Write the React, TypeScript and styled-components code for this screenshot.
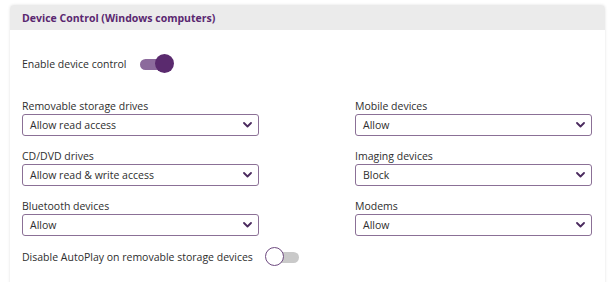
import React from "react";
import styled, { createGlobalStyle } from "styled-components";

const Global = createGlobalStyle`
  html, body { margin: 0; padding: 0; background: #ffffff; }
  body { font-family: "Open Sans", "Noto Sans", sans-serif; color: #2e2e2e; }
`;

const Page = styled.div`
  padding: 5px 5px 0 10px;
`;

const Card = styled.section`
  background: #ffffff;
  border-radius: 4px 4px 0 0;
  box-shadow: 0 0 3px rgba(0, 0, 0, 0.12);
  height: 290px;
`;

const Header = styled.div`
  height: 25px;
  display: flex;
  align-items: center;
  padding-left: 12px;
  background: #ebebeb;
  border-radius: 4px 4px 0 0;
  font-size: 10.5px;
  font-weight: 700;
  color: #5a2770;
`;

const Body = styled.div`
  padding: 24px 13px 0 12px;
  display: flex;
  flex-direction: column;
`;

const ToggleRow = styled.div<{ $mt?: number }>`
  display: flex;
  align-items: center;
  gap: 12px;
  height: 20px;
  margin-top: ${(p) => p.$mt ?? 0}px;
  font-size: 10.5px;
`;

const Track = styled.div<{ $on: boolean }>`
  position: relative;
  width: 36px;
  height: 20px;
  &::before {
    content: "";
    position: absolute;
    left: 2px;
    right: 2px;
    top: 5px;
    height: 11px;
    border-radius: 6px;
    background: ${(p) => (p.$on ? "#8c6a9c" : "#c9c9c9")};
  }
`;

const Thumb = styled.div<{ $on: boolean }>`
  position: absolute;
  top: 0;
  ${(p) => (p.$on ? "right: 0;" : "left: 0;")}
  width: 19px;
  height: 19px;
  box-sizing: border-box;
  border-radius: 50%;
  background: ${(p) => (p.$on ? "#5a2a6e" : "#ffffff")};
  border: ${(p) => (p.$on ? "none" : "1.5px solid #6e4a80")};
`;

const Grid = styled.div`
  display: grid;
  grid-template-columns: 1fr 1fr;
  column-gap: 96px;
  row-gap: 13px;
  margin-top: 25px;
`;

const Field = styled.div`
  display: flex;
  flex-direction: column;
`;

const Label = styled.div`
  font-size: 10.5px;
  line-height: 14px;
  margin-bottom: 1px;
`;

const Select = styled.div`
  height: 22px;
  box-sizing: border-box;
  border: 1px solid #8b7096;
  border-radius: 3px;
  display: flex;
  align-items: center;
  justify-content: space-between;
  padding: 0 6px 0 7px;
  font-size: 10.5px;
  background: #fff;
`;

const Chevron = () => (
  <svg width="9" height="6" viewBox="0 0 9 6">
    <path d="M1 1 L4.5 4.5 L8 1" fill="none" stroke="#4a2a5e" strokeWidth="1.8" strokeLinecap="round" strokeLinejoin="round" />
  </svg>
);

const fields = [
  ["Removable storage drives", "Allow read access"],
  ["Mobile devices", "Allow"],
  ["CD/DVD drives", "Allow read & write access"],
  ["Imaging devices", "Block"],
  ["Bluetooth devices", "Allow"],
  ["Modems", "Allow"],
];

export default function App() {
  return (
    <>
      <Global />
      <Page>
        <Card>
          <Header>Device Control (Windows computers)</Header>
          <Body>
            <ToggleRow>
              <span>Enable device control</span>
              <Track $on>
                <Thumb $on />
              </Track>
            </ToggleRow>
            <Grid>
              {fields.map(([label, value]) => (
                <Field key={label}>
                  <Label>{label}</Label>
                  <Select>
                    <span>{value}</span>
                    <Chevron />
                  </Select>
                </Field>
              ))}
            </Grid>
            <ToggleRow $mt={11}>
              <span>Disable AutoPlay on removable storage devices</span>
              <Track $on={false}>
                <Thumb $on={false} />
              </Track>
            </ToggleRow>
          </Body>
        </Card>
      </Page>
    </>
  );
}
